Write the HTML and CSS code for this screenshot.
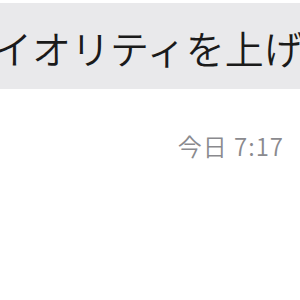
FILE: index.html
```html
<!DOCTYPE html>
<html lang="ja">
<head>
<meta charset="utf-8">
<link rel="stylesheet" href="styles.css">
</head>
<body>
<div class="chat">
  <div class="bubble"><span class="msg">プライオリティを上げてください</span></div>
  <div class="stamp">今日 7:17</div>
</div>
</body>
</html>
```
FILE: styles.css
```css
html, body {
  margin: 0;
  padding: 0;
  background: #ffffff;
  overflow: hidden;
  width: 300px;
  height: 300px;
}
.chat {
  display: flex;
  flex-direction: column;
  padding-top: 3px;
}
.bubble {
  height: 86px;
  background: #e9e9eb;
  display: flex;
  align-items: center;
  white-space: nowrap;
  overflow: hidden;
}
.msg {
  margin-left: -85px;
  font-family: "Noto Sans CJK JP", sans-serif;
  font-weight: 350;
  font-size: 39px;
  color: #1a1a1a;
  line-height: 1;
  padding-top: 2px;
}
.stamp {
  align-self: flex-end;
  margin-right: 16px;
  margin-top: 45px;
  font-family: "Noto Sans CJK JP", sans-serif;
  font-weight: 350;
  font-size: 24px;
  letter-spacing: 1px;
  color: #8a8a8e;
  line-height: 1;
}
```
